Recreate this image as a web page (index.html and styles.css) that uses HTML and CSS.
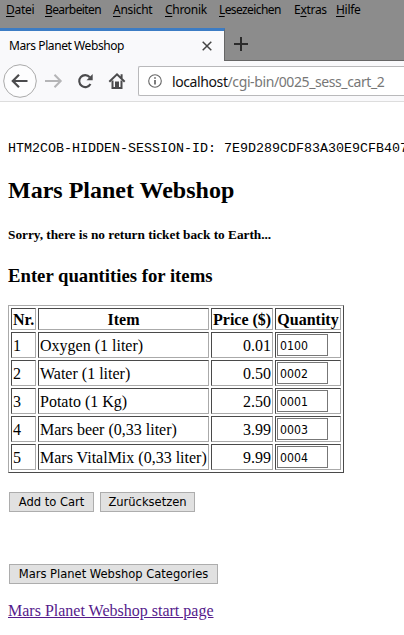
FILE: index.html
```html
<!DOCTYPE html>
<html lang="de">
<head>
<meta charset="utf-8">
<title>Mars Planet Webshop</title>
<link rel="stylesheet" href="styles.css">
</head>
<body>
<header class="browser">
  <nav class="menubar">
    <span class="m1"><u>D</u>atei</span><span class="m2"><u>B</u>earbeiten</span><span class="m3"><u>A</u>nsicht</span><span class="m4"><u>C</u>hronik</span><span class="m5"><u>L</u>esezeichen</span><span class="m6">E<u>x</u>tras</span><span class="m7"><u>H</u>ilfe</span>
  </nav>
  <div class="tabs">
    <div class="tab"><span class="tab-title">Mars Planet Webshop</span>
      <svg class="close" width="10" height="10" viewBox="0 0 10 10"><path d="M.7.7l8.6 8.6M9.3.7L.7 9.3" stroke="#444" stroke-width="1.5"/></svg>
    </div>
    <svg class="plus" width="14" height="14" viewBox="0 0 14 14"><path d="M7 0v14M0 7h14" stroke="#2b2b2b" stroke-width="2"/></svg>
  </div>
  <div class="toolbar">
    <svg width="138" height="40" viewBox="0 0 138 40" fill="none">
      <circle cx="20" cy="20" r="16.3" fill="#fdfdfe" stroke="#aaa"/>
      <path d="M27.5 20H13.5M19 13.7L12.8 20l6.2 6.3" stroke="#4b4b4d" stroke-width="2.2"/>
      <path d="M45 20H60M54.5 13.7L60.7 20l-6.2 6.3" stroke="#b5b5b7" stroke-width="2"/>
      <path d="M89.8 16.2A6 6 0 1 0 90.5 23" stroke="#4b4b4d" stroke-width="2.1"/>
      <path d="M92.7 13V19.2H86.5Z" fill="#4b4b4d"/>
      <path d="M109.3 20.8L117 13.4l7.7 7.4M121.6 13.2v4" stroke="#4b4b4d" stroke-width="2"/>
      <path d="M112.5 19.5V27h9v-7.5" stroke="#4b4b4d" stroke-width="2"/>
      <path d="M115 20.5h4V27h-4z" fill="#4b4b4d"/>
    </svg>
    <div class="url">
      <svg width="14" height="14" viewBox="0 0 14 14" fill="none" stroke="#666"><circle cx="7" cy="7" r="6.3" stroke-width="1.1"/><path d="M7 6v4.5M7 3.2v1.6" stroke-width="1.7"/></svg>
      <span class="address"><b>localhost</b>/cgi-bin/0025_sess_cart_2</span>
    </div>
  </div>
</header>
<main>
  <pre>HTM2COB-HIDDEN-SESSION-ID: 7E9D289CDF83A30E9CFB407</pre>
  <h1>Mars Planet Webshop</h1>
  <h2 class="notice">Sorry, there is no return ticket back to Earth...</h2>
  <h3>Enter quantities for items</h3>
  <form>
    <table>
      <colgroup><col class="c1"><col class="c2"><col class="c3"><col class="c4"></colgroup>
      <tr><th>Nr.</th><th>Item</th><th>Price ($)</th><th>Quantity</th></tr>
      <tr><td>1</td><td>Oxygen (1 liter)</td><td class="price">0.01</td><td class="qty"><input value="0100"></td></tr>
      <tr><td>2</td><td>Water (1 liter)</td><td class="price">0.50</td><td class="qty"><input value="0002"></td></tr>
      <tr><td>3</td><td>Potato (1 Kg)</td><td class="price">2.50</td><td class="qty"><input value="0001"></td></tr>
      <tr><td>4</td><td>Mars beer (0,33 liter)</td><td class="price">3.99</td><td class="qty"><input value="0003"></td></tr>
      <tr><td>5</td><td>Mars VitalMix (0,33 liter)</td><td class="price">9.99</td><td class="qty"><input value="0004"></td></tr>
    </table>
    <div class="actions"><button type="button" class="add">Add to Cart</button><button type="button" class="reset">Zurücksetzen</button></div>
    <button type="button" class="categories">Mars Planet Webshop Categories</button>
  </form>
  <a href="#">Mars Planet Webshop start page</a>
</main>
</body>
</html>
```
FILE: styles.css
```css
* { box-sizing: border-box; }
html, body { height: 635px; overflow: hidden; }
body { margin: 0; background: #fff; color: #000; font: 16px/18px "Liberation Serif", serif; }
svg { display: block; flex: none; }

.browser { font-family: "Noto Sans", sans-serif; background: #8c8c8c; white-space: nowrap; }
.menubar { height: 28px; display: flex; padding-left: 6px; font-size: 12px; line-height: 20px; letter-spacing: -.3px; }
.menubar u { text-underline-offset: 2px; }
.menubar span { flex: none; }
.m1 { width: 39px; }
.m2 { width: 68px; }
.m3 { width: 52px; }
.m4 { width: 54px; }
.m5 { width: 75px; }
.m6 { width: 42px; }
.menubar .m2, .menubar .m5 { letter-spacing: -.6px; }
.tabs { height: 33px; display: flex; border-bottom: 1px solid #666; }
.tab { width: 225px; height: 33px; padding: 0 12px 0 9px; display: flex; align-items: center; justify-content: space-between; background: #f9f9fb; border-top: 3px solid #3c7cc4; border-right: 1px solid #666; font-size: 12px; }
.tab-title { letter-spacing: -.42px; }
.plus { margin: 9px 0 0 9px; }
.toolbar { height: 41px; display: flex; background: #f9f9fb; border-bottom: 1px solid #ddd; }
.url { flex: 1; height: 30px; margin-top: 5px; padding-left: 9px; display: flex; align-items: center; gap: 10px; background: #fff; border: 1px solid #b9b9bb; border-right: 0; border-radius: 2px 0 0 2px; font-size: 14px; color: #777; }
.address { letter-spacing: -.4px; padding-top: 2px; }
.address b { font-weight: 400; color: #111; }

main { padding: 39px 8px 0; white-space: nowrap; }
pre { margin: 0 -8px 0 0; font: 13.33px/16px "Liberation Mono", monospace; }
h1 { margin: 19px 0 0; font-size: 24px; line-height: 28px; }
.notice { margin: 23px 0 0; font-size: 13.33px; line-height: 15px; letter-spacing: -.03px; }
h3 { margin: 23px 0 0; font-size: 18.72px; line-height: 22px; }
form { margin-top: 18px; }
table { width: 336px; table-layout: fixed; border: 1px solid; border-color: #aaa #4a4a4a #4a4a4a #aaa; border-spacing: 2px; }
.c1 { width: 25px; }
.c2 { width: 171px; }
.c3 { width: 62px; }
.c4 { width: 66px; }
th, td { height: 26px; padding: 2px 1px 0; border: 1px solid; border-color: #4a4a4a #aaa #aaa #4a4a4a; }
th { height: 22px; }
td.qty { padding: 1px; }
.price { text-align: right; }
input, button { font: 12.8px/16px "DejaVu Sans Condensed", "DejaVu Sans", sans-serif; color: #000; border-radius: 0; }
input { display: block; width: 51px; height: 22px; margin: 0; padding: 2px 2px 0; border: 1px solid #777; background: #fff; font-size: 12.2px; }
button { height: 20px; margin: 0; padding: 0; border: 1px solid #adadad; background: #e1e1e1; white-space: nowrap; }
.actions { display: flex; gap: 6px; margin: 19px 0 52px 1px; }
.add { width: 85px; }
.reset { width: 95px; }
.categories { display: block; width: 209px; margin-left: 1px; }
a { display: inline-block; margin-top: 18px; color: #551a8b; }
```
